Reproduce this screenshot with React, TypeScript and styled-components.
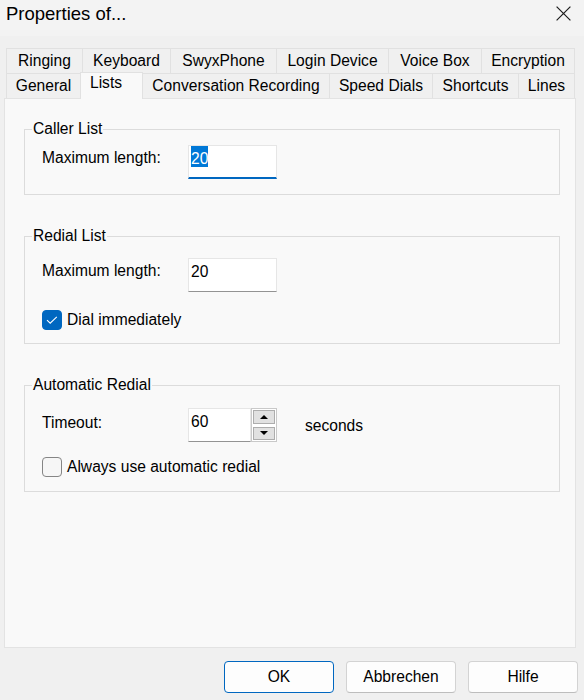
import React from "react";
import styled, { createGlobalStyle, css } from "styled-components";

const GlobalStyle = createGlobalStyle`
  html, body {
    margin: 0;
    padding: 0;
    background: #f0f0f0;
  }
  body {
    font-family: "Liberation Sans", Arial, sans-serif;
    font-size: 15.6px;
    color: #000;
  }
  #root {
    height: 700px;
  }
`;

const Window = styled.div`
  display: flex;
  flex-direction: column;
  height: 700px;
  overflow: hidden;
`;

const TitleBar = styled.div`
  flex: none;
  height: 36px;
  box-sizing: border-box;
  display: flex;
  justify-content: space-between;
  align-items: flex-start;
  padding: 0 13px 0 6px;
  background: #f3f3f3;
`;

const Title = styled.div`
  margin-top: 3px;
  font-size: 18.5px;
  line-height: 22px;
`;

const CloseIcon = styled.svg`
  margin-top: 6px;
  flex: none;
`;

const Main = styled.div`
  flex: 1;
  min-height: 0;
  display: flex;
  flex-direction: column;
  padding: 12px 0 0 4px;
`;

const TabStrip = styled.div`
  flex: none;
  display: flex;
  flex-direction: column;
  margin-left: 2px;
`;

const TabRow = styled.div`
  display: flex;
  height: 25px;
`;

const Tab = styled.div<{ $w: number; $active?: boolean; $last?: boolean }>`
  flex: none;
  width: ${(p) => p.$w}px;
  height: 25px;
  box-sizing: border-box;
  padding-top: 3px;
  line-height: 18px;
  text-align: center;
  white-space: nowrap;
  background: #f0f0f0;
  border-top: 1px solid #e1e1e1;
  border-left: 1px solid #e1e1e1;
  border-right: ${(p) => (p.$last ? "1px solid #e1e1e1" : "0")};
  ${(p) =>
    p.$active &&
    css`
      position: relative;
      z-index: 1;
      height: 27px;
      margin: -1px -1px -1px 0;
      padding: 1px 11px 0 0;
      background: #f9f9f9;
      border-right: 1px solid #e1e1e1;
    `}
`;

const Panel = styled.div`
  flex: 1;
  min-height: 0;
  margin-right: 8px;
  box-sizing: border-box;
  display: flex;
  flex-direction: column;
  padding: 21px 15px 0 19px;
  background: #f9f9f9;
  border: 1px solid #e3e3e3;
`;

const Group = styled.fieldset`
  margin: 0;
  padding: 0;
  min-width: 0;
  border: 1px solid #dcdcdc;
  & + & {
    margin-top: 32px;
  }
`;

const Legend = styled.legend`
  margin-left: 7px;
  padding: 0 1px;
  line-height: 18px;
`;

const GroupBody = styled.div<{ $top: number; $bottom: number }>`
  display: flex;
  flex-direction: column;
  padding: ${(p) => p.$top}px 0 ${(p) => p.$bottom}px 17px;
`;

const FieldRow = styled.div`
  display: grid;
  grid-template-columns: 146px 89px auto;
  align-items: start;
`;

const Label = styled.span<{ $top?: number }>`
  padding-top: ${(p) => p.$top ?? 4}px;
  line-height: 18px;
`;

const Unit = styled.span`
  padding: 9px 0 0 28px;
  line-height: 18px;
`;

const TextField = styled.div<{ $focused?: boolean }>`
  box-sizing: border-box;
  height: 34px;
  min-width: 0;
  flex: 1;
  padding: 0 2px;
  background: #fff;
  border: 1px solid #e6e6e6;
  border-bottom: ${(p) => (p.$focused ? "2px solid #0067c0" : "1px solid #939393")};
`;

const Value = styled.span<{ $selected?: boolean }>`
  display: inline-block;
  box-sizing: border-box;
  height: 21px;
  padding-top: 4px;
  line-height: 17px;
  background: ${(p) => (p.$selected ? "#0078d7" : "transparent")};
  color: ${(p) => (p.$selected ? "#fff" : "#000")};
`;

const SpinField = styled.div`
  display: flex;
  width: 89px;
  height: 34px;
`;

const SpinButtons = styled.div`
  flex: none;
  box-sizing: border-box;
  width: 26px;
  height: 34px;
  display: flex;
  flex-direction: column;
  gap: 3px;
  padding: 1px;
  background: #fff;
  border: 1px solid #c9c9c9;
`;

const SpinArrow = styled.button<{ $down?: boolean }>`
  flex: 1;
  margin: 0;
  padding: 0;
  display: flex;
  align-items: center;
  justify-content: center;
  background: #e1e1e1;
  border: 1px solid #adadad;
  &::after {
    content: "";
    border-left: 4.5px solid transparent;
    border-right: 4.5px solid transparent;
    ${(p) =>
      p.$down
        ? css`
            border-top: 4.5px solid #000;
          `
        : css`
            border-bottom: 4.5px solid #000;
          `}
  }
`;

const CheckRow = styled.label<{ $top: number }>`
  display: flex;
  align-items: center;
  gap: 5px;
  height: 20px;
  margin-top: ${(p) => p.$top}px;
  line-height: 18px;
`;

const CheckBox = styled.span<{ $checked?: boolean }>`
  flex: none;
  box-sizing: border-box;
  width: 20px;
  height: 20px;
  border-radius: 4px;
  display: inline-flex;
  align-items: center;
  justify-content: center;
  background: ${(p) => (p.$checked ? "#0067c0" : "#f6f6f6")};
  border: 1px solid ${(p) => (p.$checked ? "#0067c0" : "#858585")};
`;

const Footer = styled.div`
  flex: none;
  display: flex;
  justify-content: flex-end;
  gap: 12px;
  padding: 13px 6px 7px 0;
`;

const Button = styled.button<{ $primary?: boolean }>`
  width: 110px;
  height: 32px;
  box-sizing: border-box;
  margin: 0;
  padding: 0;
  font: inherit;
  color: #000;
  background: #fdfdfd;
  border-radius: 4px;
  border: 1px solid ${(p) => (p.$primary ? "#0067c0" : "#d3d3d3")};
  border-bottom-color: ${(p) => (p.$primary ? "#0067c0" : "#bdbdbd")};
`;

const Checkmark = () => (
  <svg width="18" height="18" viewBox="0 0 18 18" aria-hidden="true">
    <path d="M4 9.2 L7.2 12.2 L13.8 5.8" fill="none" stroke="#fff" strokeWidth="1.1" />
  </svg>
);

const topTabs = [
  { label: "Ringing", w: 76 },
  { label: "Keyboard", w: 88 },
  { label: "SwyxPhone", w: 106 },
  { label: "Login Device", w: 112 },
  { label: "Voice Box", w: 93 },
  { label: "Encryption", w: 94 },
];

const bottomTabs = [
  { label: "General", w: 74 },
  { label: "Lists", w: 63, active: true },
  { label: "Conversation Recording", w: 187 },
  { label: "Speed Dials", w: 103 },
  { label: "Shortcuts", w: 86 },
  { label: "Lines", w: 57 },
];

export default function App() {
  return (
    <>
      <GlobalStyle />
      <Window>
        <TitleBar>
          <Title>Properties of...</Title>
          <CloseIcon width="15" height="15" viewBox="0 0 15 15" aria-label="Close">
            <path d="M0.6 0.6 L14.4 14.4 M14.4 0.6 L0.6 14.4" stroke="#1b1b1b" strokeWidth="1.2" />
          </CloseIcon>
        </TitleBar>

        <Main>
          <TabStrip>
            <TabRow>
              {topTabs.map((t, i) => (
                <Tab key={t.label} $w={t.w} $last={i === topTabs.length - 1}>
                  {t.label}
                </Tab>
              ))}
            </TabRow>
            <TabRow>
              {bottomTabs.map((t, i) => (
                <Tab key={t.label} $w={t.w} $active={t.active} $last={i === bottomTabs.length - 1}>
                  {t.label}
                </Tab>
              ))}
            </TabRow>
          </TabStrip>

          <Panel>
            <Group>
              <Legend>Caller List</Legend>
              <GroupBody $top={7} $bottom={15}>
                <FieldRow>
                  <Label>Maximum length:</Label>
                  <TextField $focused>
                    <Value $selected>20</Value>
                  </TextField>
                </FieldRow>
              </GroupBody>
            </Group>

            <Group>
              <Legend>Redial List</Legend>
              <GroupBody $top={13} $bottom={13}>
                <FieldRow>
                  <Label>Maximum length:</Label>
                  <TextField>
                    <Value>20</Value>
                  </TextField>
                </FieldRow>
                <CheckRow $top={18}>
                  <CheckBox $checked>
                    <Checkmark />
                  </CheckBox>
                  Dial immediately
                </CheckRow>
              </GroupBody>
            </Group>

            <Group>
              <Legend>Automatic Redial</Legend>
              <GroupBody $top={14} $bottom={14}>
                <FieldRow>
                  <Label $top={6}>Timeout:</Label>
                  <SpinField>
                    <TextField>
                      <Value>60</Value>
                    </TextField>
                    <SpinButtons>
                      <SpinArrow aria-label="Up" />
                      <SpinArrow $down aria-label="Down" />
                    </SpinButtons>
                  </SpinField>
                  <Unit>seconds</Unit>
                </FieldRow>
                <CheckRow $top={15}>
                  <CheckBox />
                  Always use automatic redial
                </CheckRow>
              </GroupBody>
            </Group>
          </Panel>
        </Main>

        <Footer>
          <Button $primary>OK</Button>
          <Button>Abbrechen</Button>
          <Button>Hilfe</Button>
        </Footer>
      </Window>
    </>
  );
}
